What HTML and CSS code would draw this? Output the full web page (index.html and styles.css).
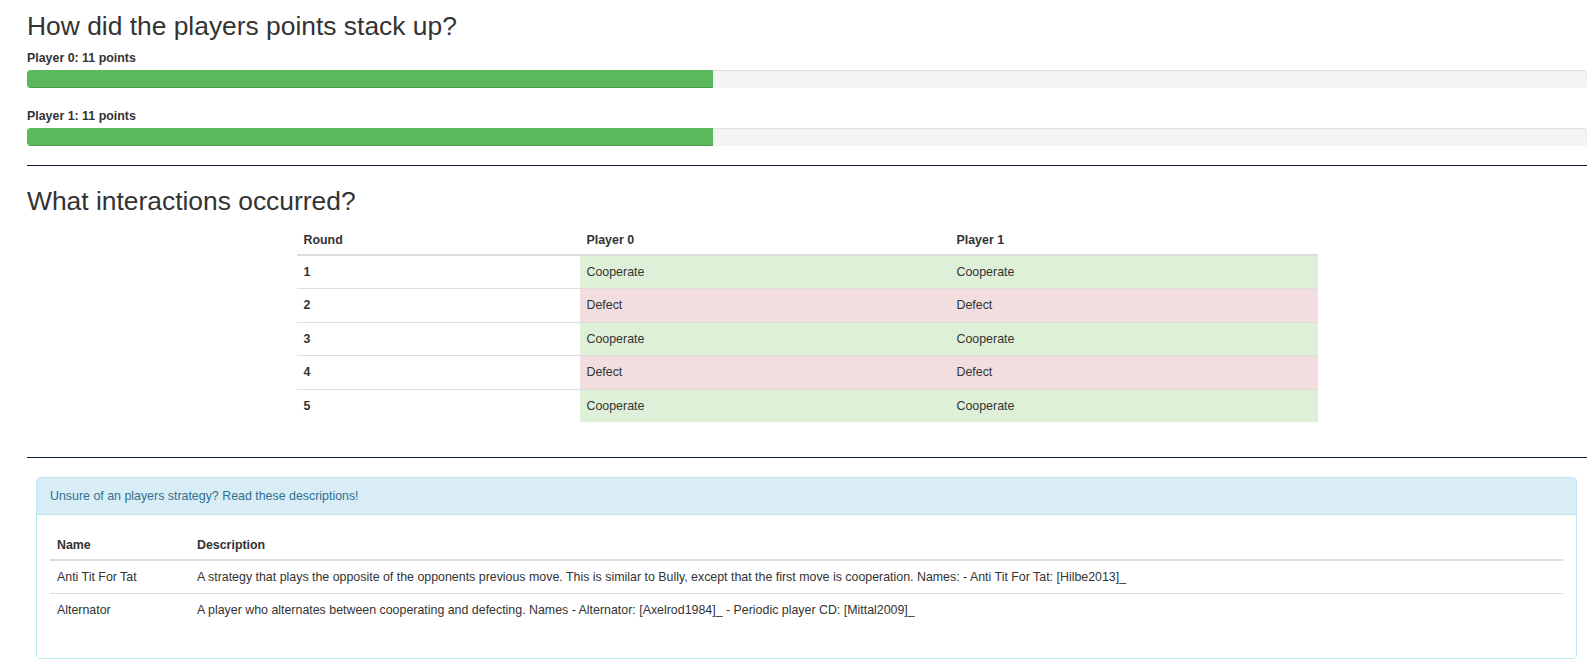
FILE: index.html
```html
<!DOCTYPE html>
<html lang="en">
<head>
<meta charset="utf-8">
<title>Match results</title>
<link rel="stylesheet" href="styles.css">
</head>
<body>
<div class="page">
  <h2 class="title">How did the players points stack up?</h2>
  <div class="scores">
    <div class="score">
      <div class="score-label">Player 0: 11 points</div>
      <div class="progress"><div class="progress-bar" style="width: 44%"></div></div>
    </div>
    <div class="score">
      <div class="score-label">Player 1: 11 points</div>
      <div class="progress"><div class="progress-bar" style="width: 44%"></div></div>
    </div>
  </div>
  <hr class="rule rule-first">
  <h2 class="title title-second">What interactions occurred?</h2>
  <table class="table rounds">
    <thead>
      <tr><th class="col-round">Round</th><th class="col-p0">Player 0</th><th>Player 1</th></tr>
    </thead>
    <tbody>
      <tr><th>1</th><td class="success">Cooperate</td><td class="success">Cooperate</td></tr>
      <tr><th>2</th><td class="danger">Defect</td><td class="danger">Defect</td></tr>
      <tr><th>3</th><td class="success">Cooperate</td><td class="success">Cooperate</td></tr>
      <tr><th>4</th><td class="danger">Defect</td><td class="danger">Defect</td></tr>
      <tr><th>5</th><td class="success">Cooperate</td><td class="success">Cooperate</td></tr>
    </tbody>
  </table>
  <hr class="rule rule-second">
  <div class="panel">
    <div class="panel-heading">Unsure of an players strategy? Read these descriptions!</div>
    <div class="panel-body">
      <table class="table strategies">
        <thead>
          <tr><th class="col-name">Name</th><th>Description</th></tr>
        </thead>
        <tbody>
          <tr><td>Anti Tit For Tat</td><td>A strategy that plays the opposite of the opponents previous move. This is similar to Bully, except that the first move is cooperation. Names: - Anti Tit For Tat: [Hilbe2013]_</td></tr>
          <tr><td>Alternator</td><td>A player who alternates between cooperating and defecting. Names - Alternator: [Axelrod1984]_ - Periodic player CD: [Mittal2009]_</td></tr>
        </tbody>
      </table>
    </div>
  </div>
</div>
</body>
</html>
```

FILE: styles.css
```css
* { box-sizing: border-box; }

html, body {
  margin: 0;
  padding: 0;
  background: #fff;
}

body {
  font-family: "Liberation Sans", Arial, Helvetica, sans-serif;
  font-size: 12.4px;
  line-height: 17px;
  color: #333;
}

.page {
  padding: 0 8px 0 27px;
}

.title {
  font-size: 26.4px;
  font-weight: 400;
  line-height: 28px;
  margin: 12px 0 10px;
  color: #333;
}

.title-second {
  margin: 21px 0 9px;
}

.scores {
  display: flex;
  flex-direction: column;
  gap: 20px;
}

.score-label {
  font-weight: 700;
  line-height: 17px;
  margin-bottom: 3px;
}

.progress {
  height: 18px;
  background: #f5f5f5;
  border-radius: 4px;
  box-shadow: inset 0 1px 2px rgba(0, 0, 0, .1);
  overflow: hidden;
}

.progress-bar {
  height: 100%;
  background: #5cb85c;
  box-shadow: inset 0 -1px 0 rgba(0, 0, 0, .15);
}

.rule {
  border: 0;
  border-top: 1px solid #0f1b3d;
  height: 0;
  margin: 0;
}

.rule-first {
  margin-top: 19px;
}

.rule-second {
  margin-top: 35px;
}

.table {
  border-collapse: collapse;
  border-spacing: 0;
  table-layout: fixed;
}

.table th,
.table td {
  text-align: left;
  padding: 7px;
  line-height: 18.5px;
  vertical-align: top;
  border-top: 1px solid #ddd;
}

.table thead th {
  font-weight: 700;
  vertical-align: bottom;
  border-top: 0;
  border-bottom: 2px solid #ddd;
  padding-bottom: 4px;
}

.table tbody th {
  font-weight: 700;
}

.rounds {
  width: 1021px;
  margin: 0 auto;
}

.col-round { width: 283px; }
.col-p0 { width: 370px; }

.success { background: #dff0d8; }
.danger { background: #f2dede; }

.panel {
  margin: 19px 10px 0 9px;
  border: 1px solid #bce8f1;
  border-radius: 4px;
  overflow: hidden;
}

.panel-heading {
  background: #d9edf7;
  color: #31708f;
  padding: 10px 13px 9px;
  line-height: 17px;
  border-bottom: 1px solid #bce8f1;
}

.panel-body {
  padding: 14px 13px;
}

.strategies {
  width: 100%;
  margin-bottom: 17px;
}

.col-name { width: 140px; }
```
